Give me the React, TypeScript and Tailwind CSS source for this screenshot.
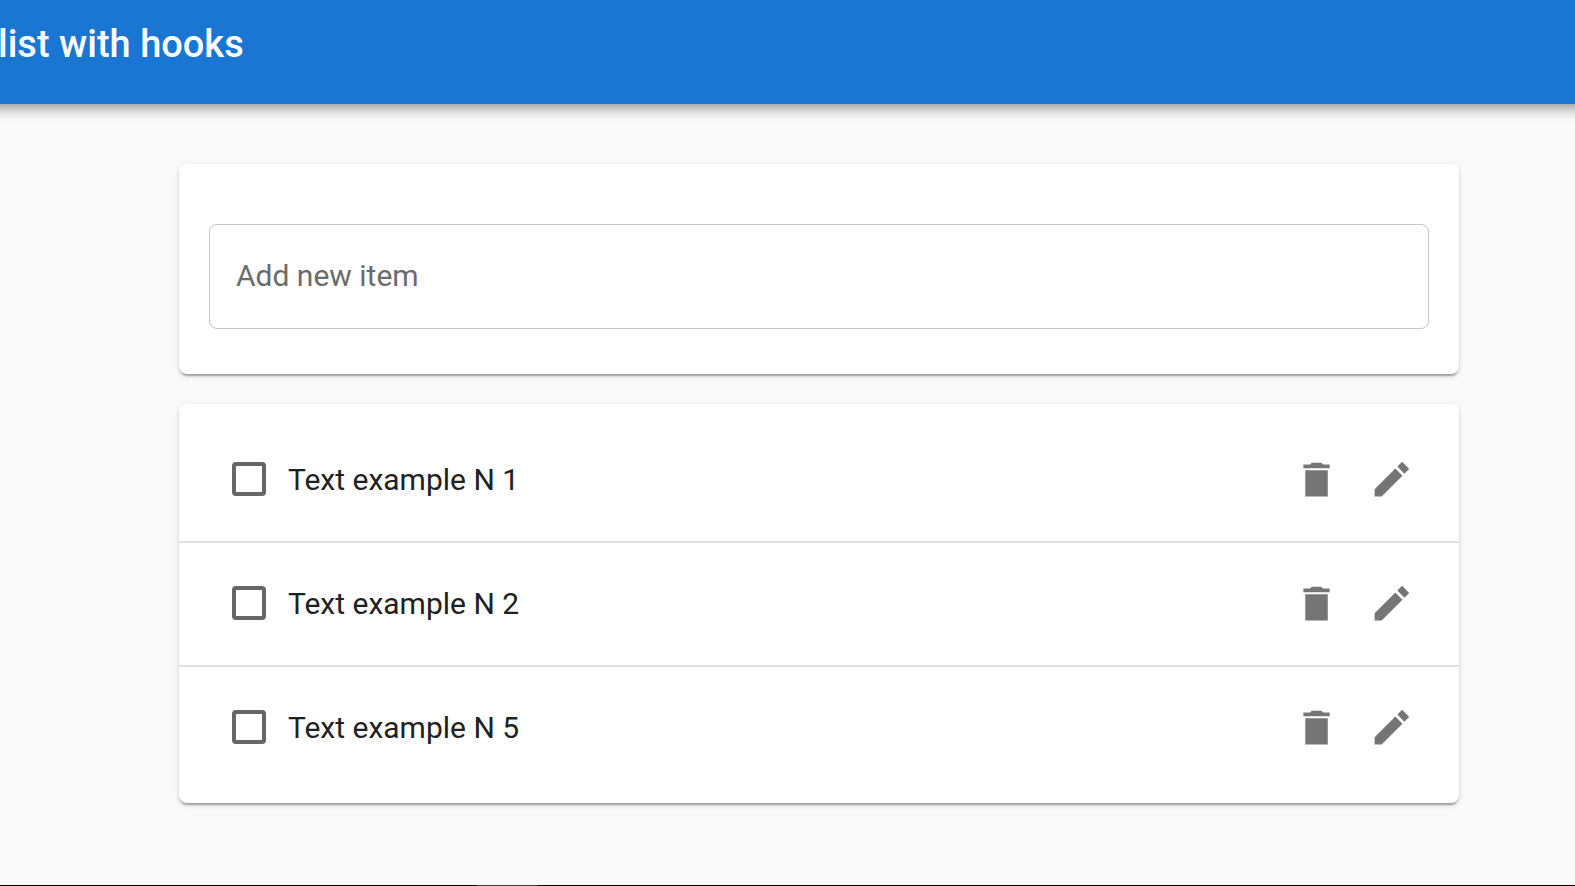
import { useState } from "react";

type Item = { id: number; text: string };

const items: Item[] = [
  { id: 1, text: "Text example N 1" },
  { id: 2, text: "Text example N 2" },
  { id: 3, text: "Text example N 5" },
];

const cardClass =
  "rounded-lg bg-white shadow-[0_4px_2px_-2px_rgba(0,0,0,0.2),0_2px_2px_0_rgba(0,0,0,0.14),0_2px_6px_0_rgba(0,0,0,0.12)]";

function TrashIcon() {
  return (
    <svg viewBox="0 0 24 24" className="size-[45px]" fill="currentColor" aria-hidden="true">
      <path d="M6 21h12V7H6v14zM19 4h-3.5l-1-1h-5l-1 1H5v2h14V4z" />
    </svg>
  );
}

function PencilIcon() {
  return (
    <svg viewBox="0 0 24 24" className="size-[45px]" fill="currentColor" aria-hidden="true">
      <path d="M3 17.25V21h3.75L17.81 9.94l-3.75-3.75L3 17.25zM21.41 6.34l-3.75-3.75-2.53 2.54 3.75 3.75 2.53-2.54z" />
    </svg>
  );
}

function Row({ item }: { item: Item }) {
  const [done, setDone] = useState(false);
  return (
    <li className="flex h-[124px] items-center border-b-2 border-[#e0e0e0] pb-0.5 pl-[53px] pr-[45px] last:h-[122px] last:border-b-0">
      <label className="flex flex-1 items-center gap-[22px]">
        <input
          type="checkbox"
          checked={done}
          onChange={() => setDone(!done)}
          className="size-[34px] shrink-0 appearance-none rounded-[4px] border-4 border-[#666666] checked:bg-[#1976d2]"
        />
        <span className="text-[30px] leading-[45px] text-[#212121]">{item.text}</span>
      </label>
      <div className="flex gap-[30px] text-[#757575]">
        <button type="button" aria-label="Delete">
          <TrashIcon />
        </button>
        <button type="button" aria-label="Edit">
          <PencilIcon />
        </button>
      </div>
    </li>
  );
}

export default function App() {
  return (
    <div className="flex min-h-screen flex-col overflow-x-hidden bg-[#fafafa] font-['Roboto',sans-serif]">
      <header className="-mx-5 h-[104px] bg-[#1976d2] px-[18px] pt-[14px] shadow-[0_4px_8px_-2px_rgba(0,0,0,0.2),0_8px_10px_0_rgba(0,0,0,0.14),0_2px_18px_0_rgba(0,0,0,0.12)]">
        <h1 className="text-[38px] font-medium leading-[60px] text-white">list with hooks</h1>
      </header>

      <main className="flex flex-1 flex-col gap-[30px] pb-20 pl-[179px] pr-[116px] pt-[60px]">
        <section className={`${cardClass} px-[30px] pb-[45px] pt-[60px]`}>
          <input
            type="text"
            aria-label="Add new item"
            placeholder="Add new item"
            className="block h-[105px] w-full rounded-lg border border-[#c4c4c4] bg-transparent px-[26px] pb-0.5 text-[30px] text-[#212121] outline-none placeholder:text-[#6b6b6b]"
          />
        </section>

        <ul className={`${cardClass} pb-[14px] pt-[15px]`}>
          {items.map((item) => (
            <Row key={item.id} item={item} />
          ))}
        </ul>
      </main>

      <footer className="flex h-px bg-black pl-[477px]">
        <span className="h-px w-[61px] bg-[#3c3c3c]" />
      </footer>
    </div>
  );
}
